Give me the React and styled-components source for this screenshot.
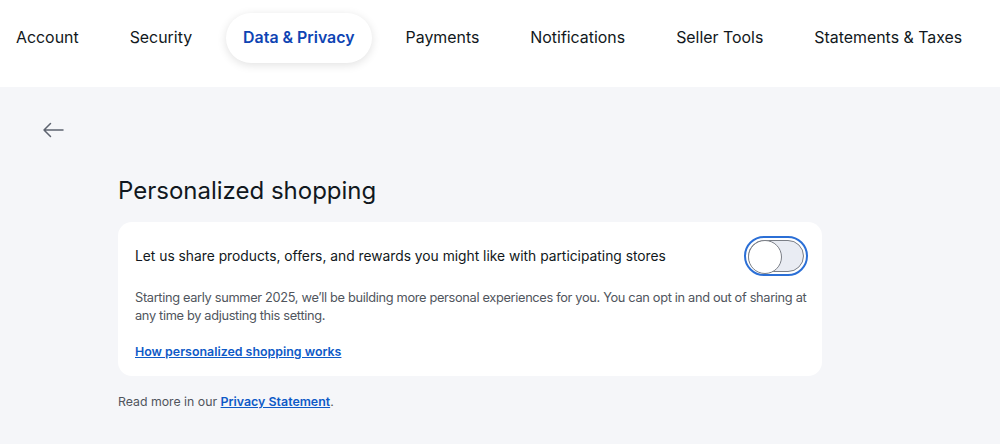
import styled, { createGlobalStyle } from "styled-components";

//Global
const GlobalStyle = createGlobalStyle`
  * {
    box-sizing: border-box;
  }
  body {
    margin: 0;
    font-family: Inter, "Noto Sans", Arial, sans-serif;
    background: #f5f6f9;
    color: #111820;
  }
`;

const tabs = [
  "Account",
  "Security",
  "Data & Privacy",
  "Payments",
  "Notifications",
  "Seller Tools",
  "Statements & Taxes",
];

const BackArrow = () => (
  <svg width="22" height="16" viewBox="0 0 22 16" fill="none">
    <path
      d="M21 8H2M8.5 1.5L2 8l6.5 6.5"
      stroke="#5e6470"
      strokeWidth="1.5"
      strokeLinecap="round"
      strokeLinejoin="round"
    />
  </svg>
);

const App = () => {
  return (
    <>
      <GlobalStyle />
      <Header>
        <Tabs>
          {tabs.map((tab) => (
            <Tab key={tab} $active={tab === "Data & Privacy"}>
              {tab}
            </Tab>
          ))}
        </Tabs>
      </Header>
      <Main>
        <BackButton aria-label="Back">
          <BackArrow />
        </BackButton>
        <Content>
          <Title>Personalized shopping</Title>
          <Card>
            <CardRow>
              <Label>
                Let us share products, offers, and rewards you might like with
                participating stores
              </Label>
              <Switch role="switch" aria-checked="false">
                <Track />
              </Switch>
            </CardRow>
            <Description>
              Starting early summer 2025, we’ll be building more personal
              experiences for you. You can opt in and out of sharing at any
              time by adjusting this setting.
            </Description>
            <Link href="#">How personalized shopping works</Link>
          </Card>
          <Footnote>
            Read more in our <Link href="#">Privacy Statement</Link>.
          </Footnote>
        </Content>
      </Main>
    </>
  );
};

const Header = styled.header`
  background: #ffffff;
  height: 87px;
  display: flex;
  align-items: center;
`;

const Tabs = styled.nav`
  display: flex;
  align-items: center;
  gap: 17px;
  margin-left: -1px;
  margin-top: -12px;
`;

const Tab = styled.div`
  padding: 0 17px;
  height: 50px;
  display: flex;
  align-items: center;
  border-radius: 25px;
  font-size: 15.9px;
  white-space: nowrap;
  font-weight: ${(p) => (p.$active ? 600 : 400)};
  color: ${(p) => (p.$active ? "#0e44b3" : "#111820")};
  background: ${(p) => (p.$active ? "#ffffff" : "transparent")};
  box-shadow: ${(p) =>
    p.$active ? "0 2px 10px rgba(0, 0, 0, 0.12)" : "none"};
`;

const Main = styled.main`
  padding: 35px 0 0 0;
`;

const BackButton = styled.button`
  margin-left: 42px;
  background: none;
  border: none;
  padding: 0;
  width: 22px;
  height: 16px;
  display: block;
  cursor: pointer;
`;

const Content = styled.section`
  width: 704px;
  margin-left: 118px;
  margin-top: 37px;
`;

const Title = styled.h1`
  margin: 0 0 15px;
  font-size: 24px;
  font-weight: 400;
  line-height: 32px;
  color: #111820;
`;

const Card = styled.div`
  background: #ffffff;
  border-radius: 14px;
  padding: 14px 14px 16px 17px;
`;

const CardRow = styled.div`
  display: flex;
  align-items: center;
  justify-content: space-between;
  gap: 24px;
`;

const Label = styled.p`
  margin: 0;
  font-size: 13.8px;
  line-height: 20px;
  color: #111820;
`;

const Switch = styled.div`
  flex-shrink: 0;
  width: 64px;
  height: 40px;
  border-radius: 20px;
  border: 2px solid #2b6fd6;
  padding: 2px;
  display: flex;
`;

const Track = styled.div`
  flex: 1;
  border-radius: 16px;
  border: 1px solid #7b7f87;
  background: #e9ecf3;
  position: relative;

  &::before {
    content: "";
    position: absolute;
    left: -1px;
    top: -1px;
    width: 32px;
    height: 32px;
    border-radius: 50%;
    background: #ffffff;
    border: 1px solid #7b7f87;
  }
`;

const Description = styled.p`
  margin: 13px -4px 15px 0;
  font-size: 12.8px;
  letter-spacing: -0.33px;
  line-height: 18px;
  color: #50555d;
`;

const Link = styled.a`
  font-size: 12.4px;
  letter-spacing: 0;
  font-weight: 600;
  color: #0e5ac7;
  text-decoration: underline;
`;

const Footnote = styled.p`
  margin: 17px 0 0;
  font-size: 12.3px;
  line-height: 18px;
  color: #50555d;
`;

export default App;
